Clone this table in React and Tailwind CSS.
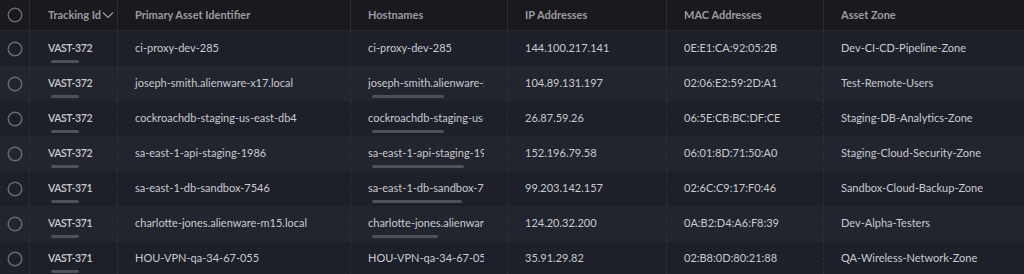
import React from 'react'

const rows = [
  { id: 'VAST-372', primary: 'ci-proxy-dev-285', host: 'ci-proxy-dev-285', hostBar: 0, ip: '144.100.217.141', mac: '0E:E1:CA:92:05:2B', zone: 'Dev-CI-CD-Pipeline-Zone' },
  { id: 'VAST-372', primary: 'joseph-smith.alienware-x17.local', host: 'joseph-smith.alienware-x17.local', hostBar: 72, ip: '104.89.131.197', mac: '02:06:E2:59:2D:A1', zone: 'Test-Remote-Users' },
  { id: 'VAST-372', primary: 'cockroachdb-staging-us-east-db4', host: 'cockroachdb-staging-us-east-db4', hostBar: 72, ip: '26.87.59.26', mac: '06:5E:CB:BC:DF:CE', zone: 'Staging-DB-Analytics-Zone' },
  { id: 'VAST-372', primary: 'sa-east-1-api-staging-1986', host: 'sa-east-1-api-staging-1986', hostBar: 92, ip: '152.196.79.58', mac: '06:01:8D:71:50:A0', zone: 'Staging-Cloud-Security-Zone' },
  { id: 'VAST-371', primary: 'sa-east-1-db-sandbox-7546', host: 'sa-east-1-db-sandbox-7546', hostBar: 90, ip: '99.203.142.157', mac: '02:6C:C9:17:F0:46', zone: 'Sandbox-Cloud-Backup-Zone' },
  { id: 'VAST-371', primary: 'charlotte-jones.alienware-m15.local', host: 'charlotte-jones.alienware-m15.local', hostBar: 66, ip: '124.20.32.200', mac: '0A:B2:D4:A6:F8:39', zone: 'Dev-Alpha-Testers' },
  { id: 'VAST-371', primary: 'HOU-VPN-qa-34-67-055', host: 'HOU-VPN-qa-34-67-055', hostBar: 0, ip: '35.91.29.82', mac: '02:B8:0D:80:21:88', zone: 'QA-Wireless-Network-Zone' },
]

const grid = 'grid grid-cols-[29px_88px_233px_157px_159px_157px_1fr]'

const Circle = () => (
  <svg width="16" height="16" viewBox="0 0 16 16">
    <circle cx="8" cy="8" r="6.8" fill="none" stroke="#656973" strokeWidth="1.5" />
  </svg>
)

export default function App() {
  return (
    <div className="h-[274px] w-[1024px] overflow-hidden bg-[#1d2029] text-[11px] text-[#c8cad0]" style={{ fontFamily: 'Lato, "Noto Sans", sans-serif' }}>
      <div className={`${grid} h-[31px] items-stretch border-b border-[#252832] bg-[#19191e] font-bold text-[#9a9ca3]`}>
        <div className="flex items-center justify-center">
          <Circle />
        </div>
        <div className="flex items-center whitespace-nowrap border-l border-[#2a2d35] pl-[18px]">
          Tracking Id
          <svg width="12" height="8" viewBox="0 0 12 8" className="ml-[1px]">
            <path d="M1 1.5 L6 6.5 L11 1.5" fill="none" stroke="#9a9ca3" strokeWidth="1.2" />
          </svg>
        </div>
        <div className="flex items-center border-l border-[#2a2d35] pl-[17px]">Primary Asset Identifier</div>
        <div className="flex items-center border-l border-[#2a2d35] pl-[17px]">Hostnames</div>
        <div className="flex items-center border-l border-[#2a2d35] pl-[17px]">IP Addresses</div>
        <div className="flex items-center border-l border-[#2a2d35] pl-[17px]">MAC Addresses</div>
        <div className="flex items-center border-l border-[#2a2d35] pl-[17px]">Asset Zone</div>
      </div>
      {rows.map((r, i) => (
        <div key={i} className={`${grid} h-[35px] items-stretch ${i % 2 === 1 ? 'bg-[#22252e]' : 'bg-[#1d2029]'}`}>
          <div className="flex items-center justify-center">
            <Circle />
          </div>
          <div className="relative flex items-center border-l border-dashed border-[#2d3039] pl-[18px]">
            <span className="text-[10.5px] font-semibold tracking-[-0.4px]">{r.id}</span>
            <div className="absolute bottom-[3px] left-[21px] h-[3px] w-[28px] rounded-full bg-[#4d515b]" />
          </div>
          <div className="flex items-center whitespace-nowrap border-l border-dashed border-[#2d3039] pl-[17px]">{r.primary}</div>
          <div className="relative flex items-center border-l border-dashed border-[#2d3039] pl-[17px]">
            <div className="w-[116px] overflow-hidden whitespace-nowrap">{r.host}</div>
            {r.hostBar > 0 && (
              <div className="absolute bottom-[3px] left-[21px] h-[3px] rounded-full bg-[#4d515b]" style={{ width: r.hostBar }} />
            )}
          </div>
          <div className="flex items-center border-l border-dashed border-[#2d3039] pl-[17px]">{r.ip}</div>
          <div className="flex items-center border-l border-dashed border-[#2d3039] pl-[17px]">{r.mac}</div>
          <div className="flex items-center border-l border-dashed border-[#2d3039] pl-[17px]">{r.zone}</div>
        </div>
      ))}
    </div>
  )
}
